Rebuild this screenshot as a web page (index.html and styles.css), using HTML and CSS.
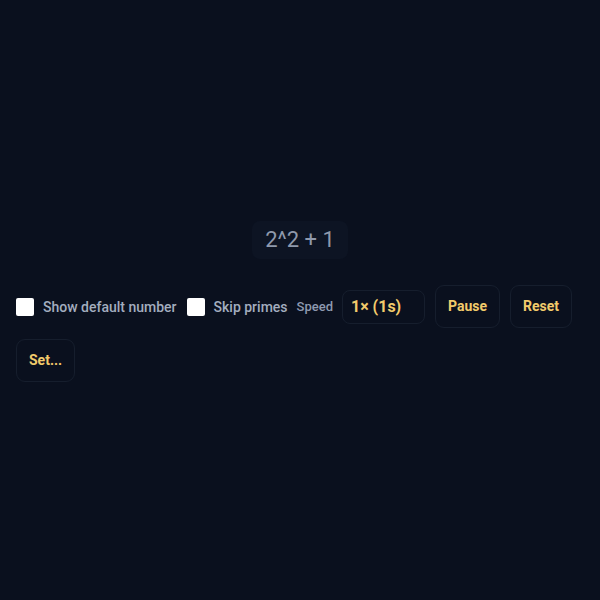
FILE: index.html
```html
<!DOCTYPE html>
<html lang="en">
<head>
<meta charset="utf-8">
<link rel="stylesheet" href="styles.css">
</head>
<body>
<main class="app">
  <section class="display">
    <div class="expr">2^2 + 1</div>
  </section>
  <section class="controls">
    <label class="check"><input type="checkbox"><span>Show default number</span></label>
    <label class="check"><input type="checkbox"><span>Skip primes</span></label>
    <span class="speed-label">Speed</span>
    <select class="speed"><option>1× (1s)</option></select>
    <button class="btn">Pause</button>
    <button class="btn">Reset</button>
    <button class="btn">Set...</button>
  </section>
</main>
</body>
</html>
```
FILE: styles.css
```css
html, body {
  margin: 0;
  height: 100%;
  background: #0a101e;
  font-family: Roboto, "Liberation Sans", sans-serif;
}
.app {
  padding: 0 16px;
  box-sizing: border-box;
}
.display {
  height: 285px;
  display: flex;
  justify-content: center;
  align-items: flex-start;
  padding-top: 221px;
  box-sizing: border-box;
}
.expr {
  background: #0d1423;
  color: #8f99ac;
  font-size: 22px;
  line-height: 26px;
  padding: 6px 13px;
  border-radius: 8px;
}
.controls {
  display: flex;
  flex-wrap: wrap;
  align-items: center;
  gap: 11px 10px;
}
.check {
  display: flex;
  align-items: center;
  gap: 9px;
  color: #a3adbf;
  font-size: 14px;
  font-weight: 500;
}
.check input {
  appearance: none;
  -webkit-appearance: none;
  width: 18px;
  height: 18px;
  margin: 0;
  background: #ffffff;
  border-radius: 2px;
}
.speed-label {
  color: #8e9ab0;
  font-size: 13px;
  font-weight: 500;
  margin-left: -1px;
  margin-right: -1px;
}
.speed {
  appearance: none;
  -webkit-appearance: none;
  background: #0a101e;
  border: 1px solid #161e2d;
  border-radius: 8px;
  color: #f2cb6b;
  font-family: Roboto, "Liberation Sans", sans-serif;
  font-size: 16px;
  font-weight: 700;
  width: 83px;
  height: 34px;
  padding: 0 8px;
}
.btn {
  background: #0a101e;
  border: 1px solid #161e2d;
  border-radius: 9px;
  color: #f2cb6b;
  font-family: Roboto, "Liberation Sans", sans-serif;
  font-size: 14px;
  font-weight: 700;
  line-height: 17px;
  padding: 12px 12px;
}
```
